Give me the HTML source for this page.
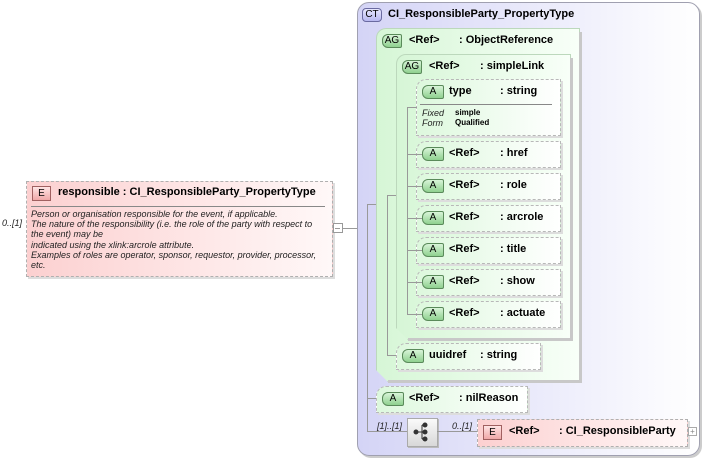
<!DOCTYPE html>
<html><head><meta charset="utf-8"><style>
body{margin:0;width:704px;height:458px;background:#fff;position:relative;overflow:hidden;font-family:"Liberation Sans",sans-serif;font-size:11px;color:#000}
.a{position:absolute}
.ct{left:357px;top:2px;width:341px;height:452px;border:1px solid #a0a0b0;border-radius:12px;background:linear-gradient(90deg,#d4d4f6,#ffffff);box-shadow:2px 2px 0 #ccc}
.ag{border:1px solid #bcd8bc;background:linear-gradient(90deg,#d6f6d6,#f8fff8);box-shadow:3px 3px 0 #c8c8c8}
.at{border:1px dashed #b8b8b8;background:linear-gradient(90deg,#ddf8dd,#ffffff);box-shadow:2px 2px 0 #ddd;border-radius:10px 0 0 0}
.bd{position:absolute;height:12px;line-height:12px;font-size:10px;text-align:center;border:1px solid #5a8a5a;background:linear-gradient(#d8f4d8,#8fd08f);border-radius:6px 2px 2px 6px}
.be{position:absolute;height:13px;line-height:13px;font-size:10px;text-align:center;border:1px solid #a06060;background:linear-gradient(#ffe4e4,#f0a8a8);width:17px}
.t{position:absolute;font-weight:bold;font-size:11px;white-space:nowrap;margin-top:1px}
.l{position:absolute;background:#999}
.i{font-style:italic;font-size:9px;position:absolute;white-space:nowrap;color:#222}
</style></head><body>
<div class="a" style="left:26px;top:181px;width:305px;height:94px;border:1px dashed #b0b0b0;background:linear-gradient(90deg,#fcd0d0,#fff8f8);box-shadow:2px 2px 0 #ddd"></div>
<div class="be" style="left:32px;top:186px">E</div>
<div class="t" style="left:58px;top:185px">responsible : CI_ResponsibleParty_PropertyType</div>
<div class="l" style="left:31px;top:206px;width:294px;height:1px;background:#888"></div>
<div class="i" style="left:31px;top:209px;line-height:10.2px;white-space:normal;width:296px">Person or organisation responsible for the event, if applicable.<br>The nature of the responsibility (i.e. the role of the party with respect to the event) may be<br>indicated using the xlink:arcrole attribute.<br>Examples of roles are operator, sponsor, requestor, provider, processor, etc.</div>
<div class="i" style="left:2px;top:218px">0..[1]</div>
<div class="a" style="left:333px;top:223px;width:8px;height:8px;border:1px solid #999;background:#fff"></div>
<div class="l" style="left:335px;top:228px;width:5px;height:1px"></div>
<div class="l" style="left:342px;top:228px;width:25px;height:1px"></div>

<div class="a ct"></div>
<div class="a" style="left:362px;top:8px;width:18px;height:12px;border:1px solid #6a6aa0;border-radius:4px;background:linear-gradient(#e8e8ff,#b8b8f0);font-size:10px;text-align:center;line-height:12px">CT</div>
<div class="t" style="left:388px;top:7px">CI_ResponsibleParty_PropertyType</div>

<div class="l" style="left:367px;top:204px;width:1px;height:228px"></div>
<div class="l" style="left:367px;top:204px;width:20px;height:1px"></div>
<div class="l" style="left:367px;top:398px;width:14px;height:1px"></div>
<div class="l" style="left:367px;top:431px;width:40px;height:1px"></div>

<div class="a ag" style="left:376px;top:28px;width:202px;height:352px;border-radius:10px 0 0 0;clip-path:polygon(0 0,100% 0,100% 100%,12px 100%,0 calc(100% - 12px))"></div>
<div class="a" style="left:579px;top:32px;width:3px;height:351px;background:#c8c8c8"></div>
<div class="a" style="left:388px;top:380px;width:194px;height:3px;background:#c8c8c8"></div>
<div class="bd" style="left:382px;top:34px;width:18px">AG</div>
<div class="t" style="left:409px;top:33px">&lt;Ref&gt;</div><div class="t" style="left:459px;top:33px">: ObjectReference</div>
<div class="l" style="left:387px;top:195px;width:1px;height:161px"></div>
<div class="l" style="left:387px;top:195px;width:21px;height:1px"></div>
<div class="l" style="left:387px;top:355px;width:12px;height:1px"></div>

<div class="a ag" style="left:396px;top:54px;width:173px;height:284px;border-radius:10px 0 0 0;clip-path:polygon(0 0,100% 0,100% 100%,12px 100%,0 calc(100% - 12px))"></div>
<div class="a" style="left:570px;top:58px;width:3px;height:283px;background:#c8c8c8"></div>
<div class="a" style="left:408px;top:338px;width:165px;height:3px;background:#c8c8c8"></div>
<div class="bd" style="left:402px;top:60px;width:18px">AG</div>
<div class="t" style="left:429px;top:59px">&lt;Ref&gt;</div><div class="t" style="left:480px;top:59px">: simpleLink</div>
<div class="l" style="left:407px;top:107px;width:1px;height:207px"></div>

<div class="a at" style="left:416px;top:79px;width:143px;height:55px"></div>
<div class="bd" style="left:422px;top:85px;width:20px">A</div>
<div class="t" style="left:449px;top:84px">type</div><div class="t" style="left:500px;top:84px">: string</div>
<div class="l" style="left:420px;top:104px;width:132px;height:1px;background:#888"></div>
<div class="l" style="left:407px;top:107px;width:10px;height:1px"></div>
<div class="i" style="left:422px;top:108px">Fixed</div><div class="i" style="left:422px;top:118px">Form</div>
<div class="a" style="left:455px;top:108px;font-size:8px;font-weight:bold">simple</div>
<div class="a" style="left:455px;top:118px;font-size:8px;font-weight:bold">Qualified</div>

<div class="a at" style="left:416px;top:141px;width:143px;height:25px"></div>
<div class="bd" style="left:422px;top:147px;width:20px">A</div><div class="t" style="left:449px;top:146px">&lt;Ref&gt;</div><div class="t" style="left:500px;top:146px">: href</div>
<div class="l" style="left:407px;top:154px;width:15px;height:1px"></div>
<div class="a at" style="left:416px;top:173px;width:143px;height:25px"></div>
<div class="bd" style="left:422px;top:179px;width:20px">A</div><div class="t" style="left:449px;top:178px">&lt;Ref&gt;</div><div class="t" style="left:500px;top:178px">: role</div>
<div class="l" style="left:407px;top:186px;width:15px;height:1px"></div>
<div class="a at" style="left:416px;top:205px;width:143px;height:25px"></div>
<div class="bd" style="left:422px;top:211px;width:20px">A</div><div class="t" style="left:449px;top:210px">&lt;Ref&gt;</div><div class="t" style="left:500px;top:210px">: arcrole</div>
<div class="l" style="left:407px;top:218px;width:15px;height:1px"></div>
<div class="a at" style="left:416px;top:237px;width:143px;height:25px"></div>
<div class="bd" style="left:422px;top:243px;width:20px">A</div><div class="t" style="left:449px;top:242px">&lt;Ref&gt;</div><div class="t" style="left:500px;top:242px">: title</div>
<div class="l" style="left:407px;top:250px;width:15px;height:1px"></div>
<div class="a at" style="left:416px;top:269px;width:143px;height:25px"></div>
<div class="bd" style="left:422px;top:275px;width:20px">A</div><div class="t" style="left:449px;top:274px">&lt;Ref&gt;</div><div class="t" style="left:500px;top:274px">: show</div>
<div class="l" style="left:407px;top:282px;width:15px;height:1px"></div>
<div class="a at" style="left:416px;top:301px;width:143px;height:25px"></div>
<div class="bd" style="left:422px;top:307px;width:20px">A</div><div class="t" style="left:449px;top:306px">&lt;Ref&gt;</div><div class="t" style="left:500px;top:306px">: actuate</div>
<div class="l" style="left:407px;top:314px;width:15px;height:1px"></div>

<div class="a at" style="left:396px;top:343px;width:143px;height:25px"></div>
<div class="bd" style="left:402px;top:349px;width:20px">A</div><div class="t" style="left:429px;top:348px">uuidref</div><div class="t" style="left:480px;top:348px">: string</div>

<div class="a at" style="left:376px;top:386px;width:150px;height:25px"></div>
<div class="bd" style="left:382px;top:392px;width:20px">A</div><div class="t" style="left:409px;top:391px">&lt;Ref&gt;</div><div class="t" style="left:459px;top:391px">: nilReason</div>

<div class="i" style="left:377px;top:421px">[1]..[1]</div>
<div class="a" style="left:407px;top:418px;width:29px;height:27px;border:1px solid #aaa;background:linear-gradient(#fafafa,#d8d8d8);box-shadow:1px 1px 0 #bbb"></div>
<svg class="a" style="left:407px;top:418px" width="30" height="28"><g fill="#333" stroke="#333"><circle cx="9" cy="14" r="2"/><circle cx="18" cy="7" r="2"/><circle cx="18" cy="14" r="2"/><circle cx="18" cy="21" r="2"/><path d="M9 14H15M15 7V21M15 7H18M15 21H18" fill="none"/></g></svg>
<div class="l" style="left:437px;top:431px;width:40px;height:1px"></div>
<div class="i" style="left:452px;top:421px">0..[1]</div>
<div class="a" style="left:477px;top:419px;width:209px;height:26px;border:1px dashed #b0b0b0;background:linear-gradient(90deg,#fcd0d0,#fff8f8);box-shadow:2px 2px 0 #ddd"></div>
<div class="be" style="left:483px;top:425px">E</div>
<div class="t" style="left:509px;top:424px">&lt;Ref&gt;</div><div class="t" style="left:559px;top:424px">: CI_ResponsibleParty</div>
<div class="a" style="left:688px;top:427px;width:7px;height:7px;border:1px solid #aaa;background:#fff;font-size:8px;line-height:7px;text-align:center;color:#888">+</div>
</body></html>
